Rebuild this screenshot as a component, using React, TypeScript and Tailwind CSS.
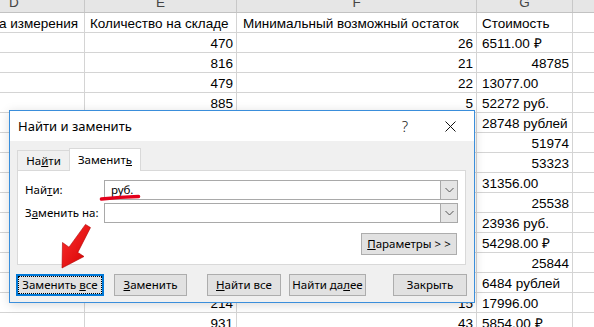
import React from "react";

type Cell = { t: string; r?: boolean };
type Row = { d?: string; e?: string; f?: string; g?: Cell };

const rows: Row[] = [
  { d: "Единица измерения", e: "Количество на складе", f: "Минимальный возможный остаток", g: { t: "Стоимость" } },
  { e: "470", f: "26", g: { t: "6511.00 ₽" } },
  { e: "816", f: "21", g: { t: "48785", r: true } },
  { e: "479", f: "22", g: { t: "13077.00" } },
  { e: "885", f: "5", g: { t: "52272 руб." } },
  { g: { t: "28748 рублей" } },
  { g: { t: "51974", r: true } },
  { g: { t: "53323", r: true } },
  { g: { t: "31356.00" } },
  { g: { t: "25538", r: true } },
  { g: { t: "23936 руб." } },
  { g: { t: "54298.00 ₽" } },
  { g: { t: "25844", r: true } },
  { g: { t: "6484 рублей" } },
  { e: "214", f: "15", g: { t: "17996.00" } },
  { e: "931", f: "43", g: { t: "5854.00 ₽" } },
];

function Chevron() {
  return (
    <div className="w-[17px] h-full bg-[#e5e5e5] border-l border-[#a9a9a9] flex items-center justify-center">
      <svg width="9" height="6" viewBox="0 0 9 6">
        <path d="M0.5 1 L4.5 5 L8.5 1" fill="none" stroke="#555" strokeWidth="1" />
      </svg>
    </div>
  );
}

function Btn({ children, w, ml, def }: { children: React.ReactNode; w: string; ml: string; def?: boolean }) {
  return (
    <div
      className={
        "h-[22px] flex items-center justify-center bg-[#e1e1e1] " +
        w +
        " " +
        ml +
        (def ? " border-2 border-[#0078d7]" : " border border-[#adadad]")
      }
    >
      {def ? (
        <div className="w-full h-full border border-dotted border-black flex items-center justify-center">
          {children}
        </div>
      ) : (
        children
      )}
    </div>
  );
}

export default function App() {
  return (
    <div className="relative w-[594px] h-[327px] overflow-hidden bg-white font-['Liberation_Sans',Arial,sans-serif] text-[13.5px] text-black">
      {/* column headers */}
      <div className="flex h-[13px] bg-[#e6e6e6] border-b border-[#c2c2c2] overflow-hidden text-[#444] leading-[18px]">
        <div className="w-[85px] shrink-0 border-r border-[#c8c8c8] pl-[9px] -mt-[6px]">D</div>
        <div className="w-[152px] shrink-0 border-r border-[#c8c8c8] text-center -mt-[6px]">E</div>
        <div className="w-[240px] shrink-0 border-r border-[#c8c8c8] text-center -mt-[6px]">F</div>
        <div className="w-[96px] shrink-0 border-r border-[#c8c8c8] text-center -mt-[6px]">G</div>
        <div className="flex-1" />
      </div>
      {rows.map((row, i) => (
        <div key={i} className="flex h-[20px] border-b border-[#d4d4d4] leading-[16px]">
          <div className="w-[85px] shrink-0 border-r border-[#d4d4d4] flex items-end justify-end pr-[6px] overflow-hidden whitespace-nowrap">
            {row.d}
          </div>
          <div
            className={
              "w-[152px] shrink-0 border-r border-[#d4d4d4] flex items-end whitespace-nowrap " +
              (i === 0 ? "pl-[5px]" : "justify-end pr-[3px]")
            }
          >
            {row.e}
          </div>
          <div
            className={
              "w-[240px] shrink-0 border-r border-[#d4d4d4] flex items-end whitespace-nowrap " +
              (i === 0 ? "pl-[6px]" : "justify-end pr-[3px]")
            }
          >
            {row.f}
          </div>
          <div
            className={
              "w-[96px] shrink-0 border-r border-[#d4d4d4] flex items-end whitespace-nowrap " +
              (row.g?.r ? "justify-end pr-[3px]" : "pl-[5px]")
            }
          >
            {row.g?.t}
          </div>
          <div className="flex-1" />
        </div>
      ))}

      {/* dialog */}
      <div className="absolute left-[9px] top-[110px] w-[466px] h-[193px] border border-[#3a8edb] bg-[#f0f0f0] flex flex-col font-['Noto_Sans',sans-serif] text-[11.5px] leading-[16px] shadow-[0_2px_10px_rgba(0,0,0,0.15)]">
        <div className="h-[30px] shrink-0 bg-white flex items-center pl-[8px]">
          <span className="flex-1 text-[13px]">Найти и заменить</span>
          <span className="text-[15px] font-light text-[#222] mr-[37px]">?</span>
          <svg width="11" height="11" viewBox="0 0 11 11" className="mr-[18px]">
            <path d="M0.5 0.5 L10.5 10.5 M10.5 0.5 L0.5 10.5" stroke="#111" strokeWidth="1" />
          </svg>
        </div>
        <div className="flex-1 flex flex-col">
          {/* tabs */}
          <div className="flex items-end h-[22px] mt-[7px] ml-[7px]">
            <div className="w-[52px] h-[20px] border border-b-0 border-r-0 border-[#d9d9d9] bg-[#f0f0f0] flex items-center justify-center">
              <span>
                На<span className="underline">й</span>ти
              </span>
            </div>
            <div className="relative z-10 -mb-[1px] w-[72px] h-[23px] border border-b-0 border-[#d9d9d9] bg-white flex items-center justify-center">
              <span>
                Заменит<span className="underline">ь</span>
              </span>
            </div>
          </div>
          <div className="ml-[7px] mr-[8px] h-[95px] border border-[#d9d9d9] bg-white flex flex-col">
            <div className="flex items-center mt-[9px] h-[20px]">
              <div className="w-[86px] pl-[7px]">
                Най<span className="underline">т</span>и:
              </div>
              <div className="w-[354px] h-[20px] border border-[#a9a9a9] flex items-center">
                <span className="flex-1 pl-[6px]">руб.</span>
                <Chevron />
              </div>
            </div>
            <div className="flex items-center mt-[3px] h-[20px]">
              <div className="w-[86px] pl-[7px]">
                З<span className="underline">а</span>менить на:
              </div>
              <div className="w-[354px] h-[20px] border border-[#a9a9a9] flex items-center">
                <span className="flex-1" />
                <Chevron />
              </div>
            </div>
            <div className="flex justify-end mt-[10px] mr-[8px]">
              <div className="w-[96px] h-[22px] bg-[#e1e1e1] border border-[#adadad] flex items-center justify-center">
                <span>
                  <span className="underline">П</span>араметры &gt; &gt;
                </span>
              </div>
            </div>
          </div>
          <div className="flex mt-[9px]">
            <Btn w="w-[88px]" ml="ml-[6px]" def>
              <span>
                Заменить <span className="underline">в</span>се
              </span>
            </Btn>
            <Btn w="w-[73px]" ml="ml-[10px]">
              <span>
                <span className="underline">З</span>аменить
              </span>
            </Btn>
            <Btn w="w-[74px]" ml="ml-[20px]">
              <span>
                <span className="underline">Н</span>айти все
              </span>
            </Btn>
            <Btn w="w-[77px]" ml="ml-[8px]">
              <span>
                Найти да<span className="underline">л</span>ее
              </span>
            </Btn>
            <Btn w="w-[74px]" ml="ml-[27px]">
              <span>Закрыть</span>
            </Btn>
          </div>
        </div>
      </div>

      {/* red annotations */}
      <svg className="absolute left-0 top-0 pointer-events-none" width="594" height="327" viewBox="0 0 594 327">
        <defs>
          <linearGradient id="ag" x1="0" y1="0" x2="1" y2="1">
            <stop offset="0" stopColor="#ff3030" />
            <stop offset="1" stopColor="#d10000" />
          </linearGradient>
        </defs>
        <path d="M101.5 199 Q120 197 138.5 196.5" fill="none" stroke="#e3001b" strokeWidth="3.6" strokeLinecap="round" />
        <polygon
          points="85.5,224.4 90.5,227.6 77.8,252.4 84,256.5 62,268 62.5,242.5 69,247.2"
          fill="url(#ag)"
          stroke="#b00000"
          strokeWidth="0.6"
        />
      </svg>
    </div>
  );
}
